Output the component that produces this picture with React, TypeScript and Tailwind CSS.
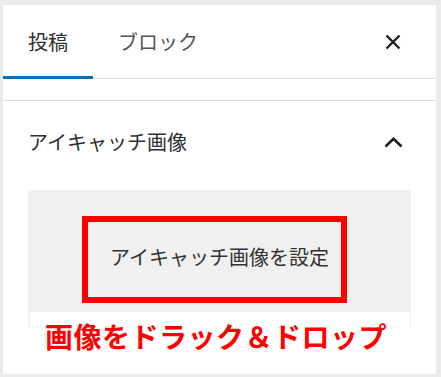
import React from "react";

export default function App() {
  const font = { fontFamily: '"Noto Sans CJK JP", "Noto Sans", sans-serif' };
  return (
    <div
      className="w-[441px] h-[377px] bg-[#ebebeb] pl-[3px] pr-[5px] pt-[5px] pb-[3px]"
      style={font}
    >
      <div className="relative w-full h-full bg-white flex flex-col">
        {/* Tabs */}
        <div className="flex items-stretch h-[74px] border-b border-[#e0e0e0] shrink-0">
          <div className="relative w-[90px] flex items-center justify-center text-[20px] text-[#2f2f2f]">
            投稿
            <div className="absolute left-0 right-0 bottom-[-1px] h-[3px] bg-[#0a72c2]" />
          </div>
          <div className="w-[130px] flex items-center justify-center text-[20px] text-[#555]">
            ブロック
          </div>
          <div className="ml-auto mr-[21px] w-[44px] flex items-center justify-center">
            <svg width="16" height="16" viewBox="0 0 16 16">
              <path d="M1.5 1.5 L14.5 14.5 M14.5 1.5 L1.5 14.5" stroke="#1e1e1e" strokeWidth="2.4" fill="none" />
            </svg>
          </div>
        </div>
        {/* Collapsed section */}
        <div className="h-[22px] border-b border-[#e0e0e0] shrink-0" />
        {/* Featured image section */}
        <div className="flex items-center h-[82px] pl-[25px] pr-[21px] shrink-0">
          <span className="text-[20px] text-[#2f2f2f]">アイキャッチ画像</span>
          <div className="ml-auto w-[44px] flex items-center justify-center">
            <svg width="19" height="11" viewBox="0 0 19 11">
              <path d="M1.5 9.5 L9.5 1.8 L17.5 9.5" stroke="#1e1e1e" strokeWidth="2.6" fill="none" />
            </svg>
          </div>
        </div>
        <div className="mt-[7px] mx-[25px] h-[138px] bg-[#f0f0f0] rounded-[2px] flex items-center justify-center pb-[4px]">
          <span className="text-[20px] text-[#333]">アイキャッチ画像を設定</span>
        </div>

        {/* Annotations */}
        <div className="absolute left-[79px] top-[211px] w-[265px] h-[87px] border-[6px] border-[#ff0000]" />
        <div className="absolute left-[27px] top-[307px] w-[380px] h-[48px] bg-white flex items-center pl-[15px]">
          <span className="text-[28px] font-bold text-[#ff0000] tracking-[0.5px] leading-none">
            画像をドラック＆ドロップ
          </span>
        </div>
      </div>
    </div>
  );
}
